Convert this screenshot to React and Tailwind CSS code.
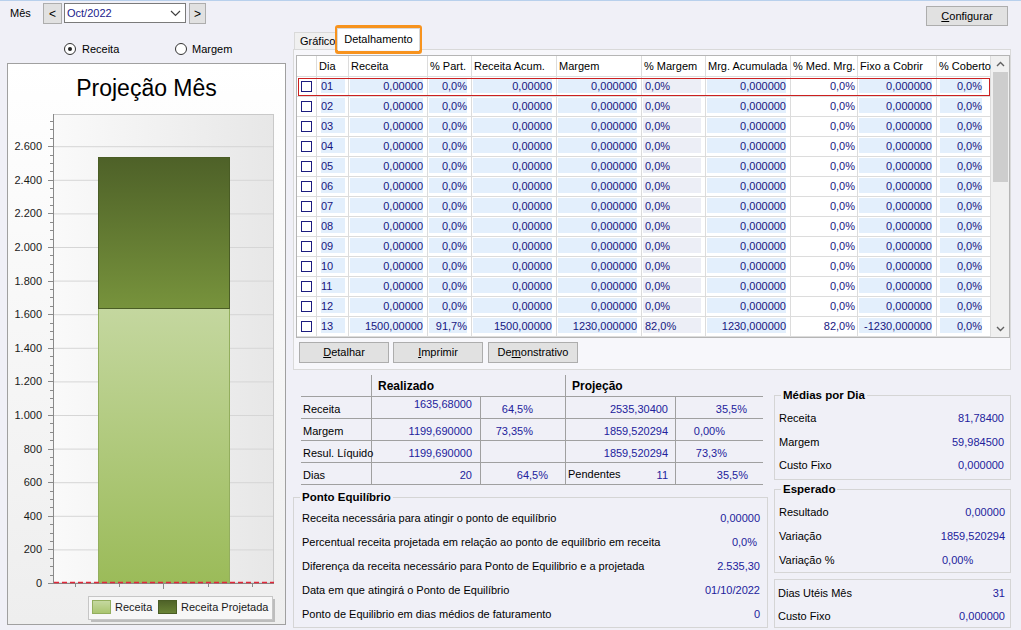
import React from "react";

const zero = ["0,00000", "0,0%", "0,00000", "0,000000", "0,0%", "0,000000", "0,0%", "0,000000", "0,0%"];
const r13 = ["1500,00000", "91,7%", "1500,00000", "1230,000000", "82,0%", "1230,000000", "82,0%", "-1230,000000", "0,0%"];

const valCols = [
  { w: "w-[79px]", pad: "pl-px pr-[4px]", bg: "bg-[#e3effc]", j: "justify-end" },
  { w: "w-[44px]", pad: "pl-px pr-[4px]", bg: "bg-[#e3effc]", j: "justify-end" },
  { w: "w-[85px]", pad: "pl-px pr-[4px]", bg: "bg-[#e3effc]", j: "justify-end" },
  { w: "w-[85px]", pad: "pl-px pr-[4px]", bg: "bg-[#e3effc]", j: "justify-end" },
  { w: "w-[64px]", pad: "pl-px pr-[4px]", bg: "bg-[#eceef6]", j: "justify-start pl-[2px]" },
  { w: "w-[85px]", pad: "pl-px pr-[4px]", bg: "bg-[#e3effc]", j: "justify-end" },
  { w: "w-[67px]", pad: "pl-px pr-[2px]", bg: "bg-white", j: "justify-end" },
  { w: "w-[79px]", pad: "pl-px pr-[4px]", bg: "bg-[#e3effc]", j: "justify-end" },
  { w: "w-[54px]", pad: "pl-[3px] pr-[8px]", bg: "bg-[#e3effc]", j: "justify-end" },
];

const headers = [
  { t: "", w: "w-[20px]" },
  { t: "Dia", w: "w-[32px]" },
  { t: "Receita", w: "w-[79px]" },
  { t: "% Part.", w: "w-[44px]" },
  { t: "Receita Acum.", w: "w-[85px]" },
  { t: "Margem", w: "w-[85px]" },
  { t: "% Margem", w: "w-[64px]" },
  { t: "Mrg. Acumulada", w: "w-[85px]" },
  { t: "% Med. Mrg.", w: "w-[67px]" },
  { t: "Fixo a Cobrir", w: "w-[79px]" },
  { t: "% Coberto", w: "w-[54px]" },
];

const rows = Array.from({ length: 13 }, (_, i) => ({
  dia: String(i + 1).padStart(2, "0"),
  vals: i === 12 ? r13 : zero,
}));

function Chart() {
  const step = 33.6;
  const base = 471;
  const labels = ["0", "200", "400", "600", "800", "1.000", "1.200", "1.400", "1.600", "1.800", "2.000", "2.200", "2.400", "2.600"];
  const minor = [];
  for (let y = base; y >= 3; y -= 8.4) minor.push(y);
  return (
    <svg width="277" height="512" className="block" style={{ fontFamily: "'Liberation Sans', Arial, sans-serif" }}>
      <defs>
        <linearGradient id="plotbg" x1="0" x2="1" y1="0" y2="0">
          <stop offset="0" stopColor="#fafafa" />
          <stop offset="1" stopColor="#e7e7e7" />
        </linearGradient>
        <linearGradient id="lightg" x1="0" x2="0" y1="0" y2="1">
          <stop offset="0" stopColor="#c4d79f" />
          <stop offset="1" stopColor="#9bbb59" />
        </linearGradient>
        <linearGradient id="darkg" x1="0" x2="0" y1="0" y2="1">
          <stop offset="0" stopColor="#4e6128" />
          <stop offset="1" stopColor="#77933c" />
        </linearGradient>
        <linearGradient id="sw1" x1="0" x2="0" y1="0" y2="1">
          <stop offset="0" stopColor="#c6d9a2" />
          <stop offset="1" stopColor="#a9c56e" />
        </linearGradient>
        <linearGradient id="sw2" x1="0" x2="0" y1="0" y2="1">
          <stop offset="0" stopColor="#4e6128" />
          <stop offset="1" stopColor="#6a8436" />
        </linearGradient>
      </defs>
      <rect x="45.5" y="2.5" width="220" height="468.5" fill="url(#plotbg)" stroke="#c9c9c9" />
      {labels.map((_, k) =>
        k > 0 ? (
          <line key={"g" + k} x1="46" x2="265" y1={base - k * step + 0.5} y2={base - k * step + 0.5} stroke="#d6d6d6" />
        ) : null
      )}
      <rect x="90.5" y="196.5" width="131" height="274.5" fill="url(#lightg)" stroke="#93ae5e" />
      <rect x="90.5" y="45.5" width="131" height="151" fill="url(#darkg)" stroke="#4a5d25" />
      <line x1="45.5" x2="45.5" y1="2" y2="471" stroke="#8a8a8a" />
      {minor.map((y, i) => (
        <line key={"m" + i} x1="42" x2="45" y1={Math.round(y) + 0.5} y2={Math.round(y) + 0.5} stroke="#8a8a8a" />
      ))}
      {labels.map((l, k) => (
        <g key={"l" + k}>
          <line x1="40" x2="45" y1={Math.round(base - k * step) + 0.5} y2={Math.round(base - k * step) + 0.5} stroke="#8a8a8a" />
          <text x="34" y={base - k * step + 4} textAnchor="end" fontSize="11" fill="#1a1a1a">
            {l}
          </text>
        </g>
      ))}
      <line x1="45" x2="266" y1="471.5" y2="471.5" stroke="#8a8a8a" />
      {[67.5, 111.5, 200.5, 244.5].map((x) => (
        <line key={"x" + x} x1={x} x2={x} y1="471" y2="475" stroke="#8a8a8a" />
      ))}
      <line x1="155.5" x2="155.5" y1="471" y2="477" stroke="#8a8a8a" />
      <line x1="46" x2="266" y1="470.5" y2="470.5" stroke="#e0283a" strokeWidth="1.3" strokeDasharray="5 3" />
      <rect x="83" y="487" width="184" height="23" fill="#bdbdbd" />
      <rect x="80.5" y="484.5" width="184" height="23" fill="#f7f7f7" stroke="#c6c6c6" />
      <rect x="84.5" y="488.5" width="18" height="13" fill="url(#sw1)" stroke="#93ae5e" />
      <text x="107" y="499" fontSize="11" fill="#1a1a1a">Receita</text>
      <rect x="150.5" y="488.5" width="18" height="13" fill="url(#sw2)" stroke="#4a5d25" />
      <text x="173" y="499" fontSize="11" fill="#1a1a1a">Receita Projetada</text>
    </svg>
  );
}

function Radio({ checked }) {
  return (
    <span className="w-[12px] h-[12px] rounded-full border border-[#333333] bg-white flex items-center justify-center">
      {checked && <span className="w-[4px] h-[4px] rounded-full bg-[#222222]" />}
    </span>
  );
}

function Chevron({ up }) {
  return (
    <svg width="9" height="6" viewBox="0 0 9 6">
      <polyline
        points={up ? "1,5 4.5,1.5 8,5" : "1,1 4.5,4.5 8,1"}
        fill="none"
        stroke="#606060"
        strokeWidth="1.4"
      />
    </svg>
  );
}

function Grid() {
  return (
    <div className="w-[714px] h-[283px] border border-[#b5b5b5] bg-white flex">
      <div className="w-[694px] flex flex-col">
        <div className="flex h-[21px] border-b border-[#dcdcdc]">
          {headers.map((h, i) => (
            <div key={i} className={`${h.w} h-full border-r border-[#dcdcdc] pl-[2px] flex items-center whitespace-nowrap`}>
              {h.t}
            </div>
          ))}
        </div>
        <div className="relative">
          {rows.map((r) => (
            <div key={r.dia} className="flex h-[20px] border-b border-[#dcdcdc]">
              <div className="w-[20px] h-full border-r border-[#dcdcdc] flex items-center pl-[4px]">
                <span className="w-[11px] h-[11px] border border-[#1d1d80] bg-white" />
              </div>
              <div className="w-[32px] h-full border-r border-[#dcdcdc] pt-px pb-[3px] pl-[4px] pr-[3px]">
                <div className="h-full bg-[#e3effc] flex items-center pt-px text-[#16167f]">{r.dia}</div>
              </div>
              {valCols.map((c, j) => (
                <div key={j} className={`${c.w} h-full border-r border-[#dcdcdc] pt-px pb-[3px] ${c.pad}`}>
                  <div className={`h-full ${c.bg} flex items-center pt-px ${c.j} text-[#16167f] whitespace-nowrap`}>{r.vals[j]}</div>
                </div>
              ))}
            </div>
          ))}
          <div className="absolute left-px top-px w-[692px] h-[18px] border border-[#cc2020] pointer-events-none" />
        </div>
      </div>
      <div className="w-[18px] h-full bg-[#f0f0f0] flex flex-col items-center">
        <div className="h-[16px] w-full flex items-center justify-center">
          <Chevron up />
        </div>
        <div className="w-[15px] h-[110px] bg-[#cdcdcd]" />
        <div className="flex-1" />
        <div className="h-[17px] w-full flex items-center justify-center">
          <Chevron />
        </div>
      </div>
    </div>
  );
}

function Btn({ children, w }) {
  return (
    <div className={`${w} h-[21px] bg-[#e1e1e1] border border-[#adadad] flex items-center justify-center`}>{children}</div>
  );
}

const blue = "text-[#22229c]";

function SummaryTable() {
  const cell = "h-[22px] border-b border-[#a0a0a0] flex items-center whitespace-nowrap";
  const c = `${cell} pt-[4px]`;
  return (
    <div className="ml-[8px] mt-[5px] w-[462px] flex flex-col">
      <div className="flex">
        <div className={`${cell} w-[71px] border-r`} />
        <div className={`${cell} w-[194px] border-r pl-[6px] font-bold text-[12px]`}>Realizado</div>
        <div className={`${cell} w-[197px] pl-[6px] font-bold text-[12px]`}>Projeção</div>
      </div>
      <div className="flex">
        <div className={`${c} w-[71px] border-r pl-[2px]`}>Receita</div>
        <div className={`${cell} w-[109px] border-r justify-end pr-[8px] pb-[6px] ${blue}`}>1635,68000</div>
        <div className={`${c} w-[85px] border-r justify-end pr-[32px] ${blue}`}>64,5%</div>
        <div className={`${c} w-[110px] border-r justify-end pr-[7px] ${blue}`}>2535,30400</div>
        <div className={`${c} w-[87px] justify-end pr-[16px] ${blue}`}>35,5%</div>
      </div>
      <div className="flex">
        <div className={`${c} w-[71px] border-r pl-[2px]`}>Margem</div>
        <div className={`${c} w-[109px] border-r justify-end pr-[8px] ${blue}`}>1199,690000</div>
        <div className={`${c} w-[85px] border-r justify-end pr-[32px] ${blue}`}>73,35%</div>
        <div className={`${c} w-[110px] border-r justify-end pr-[7px] ${blue}`}>1859,520294</div>
        <div className={`${c} w-[87px] justify-end pr-[38px] ${blue}`}>0,00%</div>
      </div>
      <div className="flex">
        <div className={`${c} w-[71px] border-r pl-[2px]`}>Resul. Líquido</div>
        <div className={`${c} w-[109px] border-r justify-end pr-[8px] ${blue}`}>1199,690000</div>
        <div className={`${c} w-[85px] border-r`} />
        <div className={`${c} w-[110px] border-r justify-end pr-[7px] ${blue}`}>1859,520294</div>
        <div className={`${c} w-[87px] justify-end pr-[36px] ${blue}`}>73,3%</div>
      </div>
      <div className="flex">
        <div className={`${c} w-[71px] border-r pl-[2px]`}>Dias</div>
        <div className={`${c} w-[109px] border-r justify-end pr-[8px] ${blue}`}>20</div>
        <div className={`${c} w-[85px] border-r justify-end pr-[17px] ${blue}`}>64,5%</div>
        <div className={`${c} w-[110px] border-r justify-between pl-[2px] pr-[7px]`}>
          <span className="pb-[2px]">Pendentes</span>
          <span className={blue}>11</span>
        </div>
        <div className={`${c} w-[87px] justify-end pr-[15px] ${blue}`}>35,5%</div>
      </div>
    </div>
  );
}

function Row({ label, value, h, pr, pl }) {
  return (
    <div className={`${h} flex items-center justify-between ${pl} ${pr} whitespace-nowrap`}>
      <span>{label}</span>
      <span className={blue}>{value}</span>
    </div>
  );
}

export default function App() {
  return (
    <div className="w-[1021px] h-[630px] overflow-hidden bg-[#f0f0f7] relative font-['Liberation_Sans',Arial,sans-serif] text-[11px] text-black border-t border-[#b8d0ec]">
      {/* top bar */}
      <div className="flex h-[27px] pt-[2px] items-start">
        <div className="ml-[10px] w-[33px] h-[21px] flex items-center">Mês</div>
        <div className="w-[19px] h-[21px] bg-[#e1e1e1] border border-[#adadad] flex items-center justify-center text-[12px]">&lt;</div>
        <div className="ml-[2px] w-[122px] h-[20px] bg-white border border-[#7a7a7a] flex items-center justify-between pl-[2px] pr-[4px]">
          <span className="text-[#1a1a8c]">Oct/2022</span>
          <svg width="11" height="7" viewBox="0 0 11 7">
            <polyline points="1,1 5.5,5.5 10,1" fill="none" stroke="#404040" strokeWidth="1.2" />
          </svg>
        </div>
        <div className="ml-[3px] w-[17px] h-[21px] bg-[#e1e1e1] border border-[#adadad] flex items-center justify-center text-[12px]">&gt;</div>
        <div className="ml-auto mr-[13px] mt-[3px] w-[82px] h-[20px] bg-[#e1e1e1] border border-[#adadad] flex items-center justify-center">
          <span>
            <span className="underline">C</span>onfigurar
          </span>
        </div>
      </div>

      <div className="flex">
        {/* left column */}
        <div className="w-[291px] flex flex-col">
          <div className="mt-[14px] h-[14px] flex items-center pl-[64px]">
            <div className="w-[111px] flex items-center gap-[6px]">
              <Radio checked />
              <span>Receita</span>
            </div>
            <div className="flex items-center gap-[5px]">
              <Radio />
              <span>Margem</span>
            </div>
          </div>
          <div className="mt-[7px] ml-[7px] w-[279px] h-[562px] border border-[#a0a0a0] bg-linear-to-b from-white to-[#eeeeee] flex flex-col">
            <div className="h-[48px] flex items-center justify-center text-[23px] text-black">Projeção Mês</div>
            <Chart />
          </div>
        </div>

        {/* right column */}
        <div className="flex-1 flex flex-col">
          <div className="h-[21px] flex items-end pl-[3px]">
            <div className="w-[42px] h-[17px] bg-[#f0f0f0] border border-b-0 border-[#d9d9d9] flex items-center pl-[5px]">Gráfico</div>
            <div className="relative z-10 -mb-px ml-px w-[83px] h-[22px] bg-white border border-b-0 border-[#d9d9d9] flex items-center justify-center">
              Detalhamento
            </div>
          </div>
          <div className="ml-[2px] w-[718px] h-[321px] border border-[#d9d9d9] bg-[#f7f7fb] pt-[5px] pl-[2px]">
            <Grid />
            <div className="mt-[4px] ml-[3px] flex">
              <Btn w="w-[90px]">
                <span>
                  <span className="underline">D</span>etalhar
                </span>
              </Btn>
              <div className="ml-[4px]">
                <Btn w="w-[90px]">
                  <span>
                    <span className="underline">I</span>mprimir
                  </span>
                </Btn>
              </div>
              <div className="ml-[5px]">
                <Btn w="w-[90px]">
                  <span>
                    De<span className="underline">m</span>onstrativo
                  </span>
                </Btn>
              </div>
            </div>
          </div>

          {/* bottom */}
          <div className="ml-[2px] flex">
            <div className="w-[475px] flex flex-col">
              <SummaryTable />
              <fieldset className="mt-[5px] w-[475px] h-[138px] border border-[#d5d5d5]">
                <legend className="ml-[6px] px-[2px] font-bold text-[11.5px] leading-[14px]">Ponto Equilíbrio</legend>
                <div className="pt-[2px]">
                  <Row h="h-[24px]" pl="pl-[8px]" pr="pr-[7px]" label="Receita necessária para atingir o ponto de equilíbrio" value="0,00000" />
                  <Row h="h-[24px]" pl="pl-[8px]" pr="pr-[10px]" label="Percentual receita projetada em relação ao ponto de equilíbrio em receita" value="0,0%" />
                  <Row h="h-[24px]" pl="pl-[8px]" pr="pr-[7px]" label="Diferença da receita necessário para Ponto de Equilibrio e a projetada" value="2.535,30" />
                  <Row h="h-[24px]" pl="pl-[8px]" pr="pr-[7px]" label="Data em que atingirá o Ponto de Equilíbrio" value="01/10/2022" />
                  <Row h="h-[24px]" pl="pl-[8px]" pr="pr-[7px]" label="Ponto de Equilibrio em dias médios de faturamento" value="0" />
                </div>
              </fieldset>
            </div>
            <div className="ml-[6px] w-[237px] flex flex-col">
              <fieldset className="mt-[18px] w-[237px] h-[92px] border border-[#d5d5d5]">
                <legend className="ml-[6px] px-[2px] font-bold text-[11.5px] leading-[14px]">Médias por Dia</legend>
                <div className="pt-[4px]">
                  <Row h="h-[24px]" pl="pl-[4px]" pr="pr-[6px]" label="Receita" value="81,78400" />
                  <Row h="h-[24px]" pl="pl-[4px]" pr="pr-[6px]" label="Margem" value="59,984500" />
                  <Row h="h-[22px]" pl="pl-[4px]" pr="pr-[6px]" label="Custo Fixo" value="0,000000" />
                </div>
              </fieldset>
              <fieldset className="mt-[2px] w-[237px] h-[91px] border border-[#d5d5d5]">
                <legend className="ml-[6px] px-[2px] font-bold text-[11.5px] leading-[14px]">Esperado</legend>
                <div className="pt-[4px]">
                  <Row h="h-[24px]" pl="pl-[4px]" pr="pr-[5px]" label="Resultado" value="0,00000" />
                  <Row h="h-[24px]" pl="pl-[4px]" pr="pr-[5px]" label="Variação" value="1859,520294" />
                  <div className="h-[24px] flex items-center pl-[4px] whitespace-nowrap">
                    <span className="w-[163px]">Variação %</span>
                    <span className={blue}>0,00%</span>
                  </div>
                </div>
              </fieldset>
              <div className="mt-[6px] w-[237px] h-[49px] border border-[#d5d5d5] pt-[2px]">
                <Row h="h-[23px]" pl="pl-[3px]" pr="pr-[5px]" label="Dias Utéis Mês" value="31" />
                <Row h="h-[22px]" pl="pl-[3px]" pr="pr-[5px]" label="Custo Fixo" value="0,000000" />
              </div>
            </div>
          </div>
        </div>
      </div>

      {/* orange highlight overlay */}
      <div className="absolute left-[335px] top-[24px] w-[87px] h-[29px] border-[3px] border-[#f7931e] rounded-[3px] pointer-events-none" />
    </div>
  );
}
